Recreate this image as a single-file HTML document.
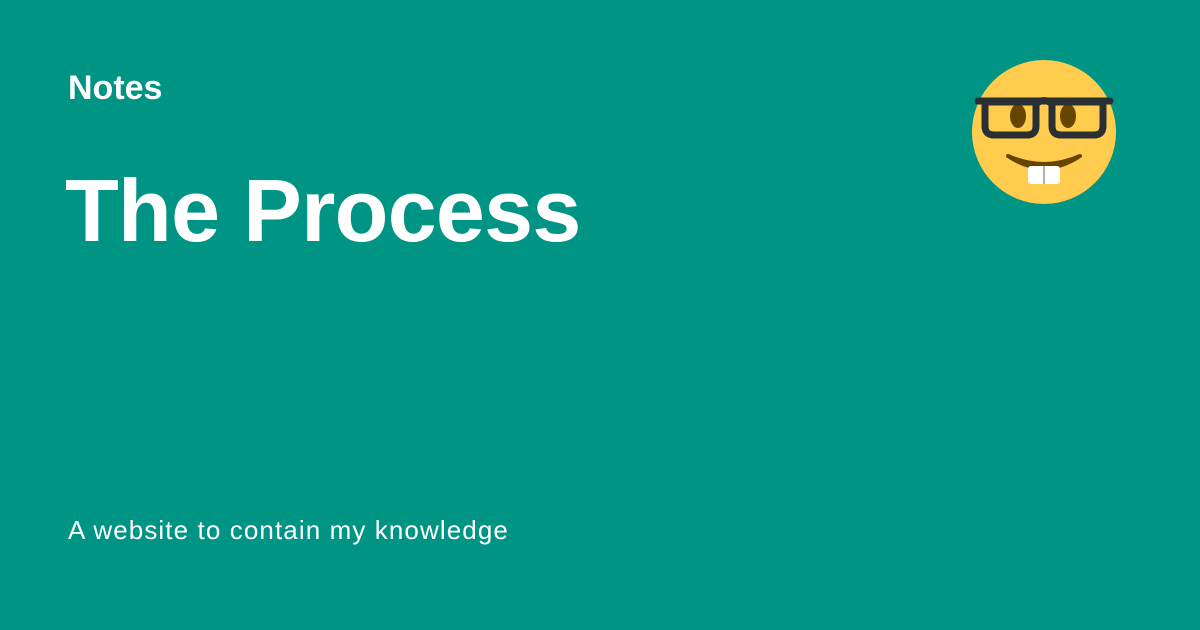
<!DOCTYPE html>
<html><head><style>
body{margin:0;width:1200px;height:630px;background:#009485;overflow:hidden;font-family:"Liberation Sans",sans-serif;color:#fff;position:relative}
.a{position:absolute;left:68px;white-space:nowrap}
</style></head><body>
<div class="a" style="top:68px;font-size:34px;font-weight:bold;line-height:40px">Notes</div>
<div class="a" style="top:158px;left:65px;font-size:88px;font-weight:bold;line-height:106px;letter-spacing:-0.7px">The Process</div>
<div class="a" style="top:513px;font-size:26px;line-height:34px;letter-spacing:1.1px">A website to contain my knowledge</div>
<svg style="position:absolute;left:0;top:0" width="1200" height="630">
<circle cx="1044" cy="132" r="72" fill="#ffcc4d"/>
<path d="M1008 156 Q1044 180 1080 156 Q1044 172 1008 156 Z" stroke="#664500" stroke-width="4" fill="#664500" stroke-linejoin="round"/>
<rect x="1028" y="166" width="32" height="18" rx="3" fill="#fff"/>
<line x1="1044" y1="166" x2="1044" y2="184" stroke="#999" stroke-width="1.5"/>
<ellipse cx="1018" cy="116" rx="8" ry="12" fill="#664500"/>
<ellipse cx="1068" cy="116" rx="8" ry="12" fill="#664500"/>
<g fill="none" stroke="#292f33" stroke-width="7" stroke-linejoin="round">
<path d="M985 102 H1036 V126 Q1036 135 1027 135 H994 Q985 135 985 126 Z"/>
<path d="M1052 102 H1103 V126 Q1103 135 1094 135 H1061 Q1052 135 1052 126 Z"/>
<path d="M978 101 H1110 M1036 104 Q1044 97 1052 104" stroke-linecap="round"/>
</g>
</svg>
</body></html>
